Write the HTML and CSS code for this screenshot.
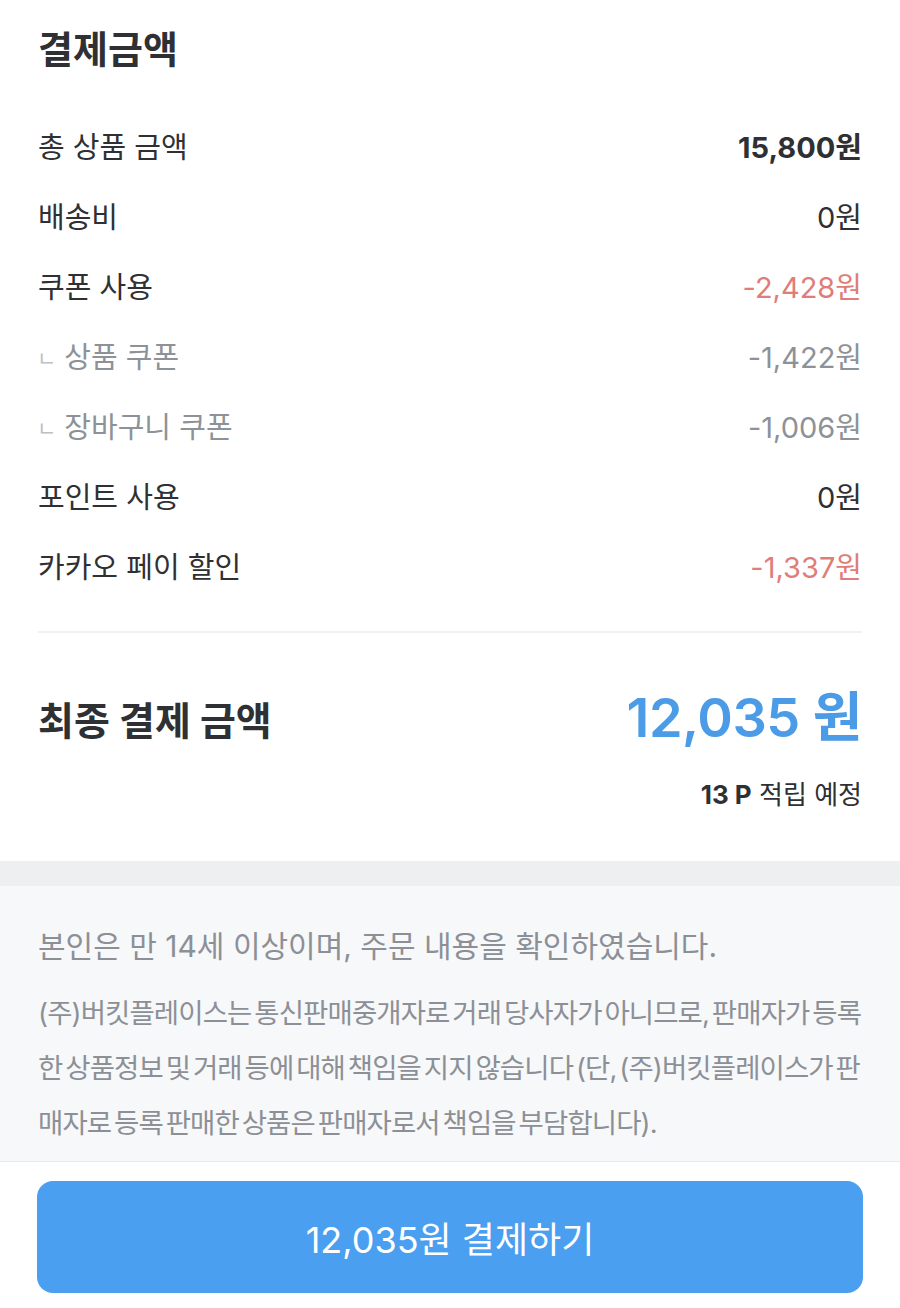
FILE: index.html
```html
<!DOCTYPE html>
<html lang="ko">
<head>
  <meta charset="UTF-8">
  <title>결제금액</title>
  <meta name="viewport" content="width=device-width, initial-scale=1.0">
  <link rel="stylesheet" href="styles.css">
</head>
<body>
  <section class="summary">
    <h2 class="title">결제금액</h2>

    <ul class="rows">
      <li class="row"><span>총 상품 금액</span><strong>15,800원</strong></li>
      <li class="row"><span>배송비</span><span>0원</span></li>
      <li class="row"><span>쿠폰 사용</span><span class="minus">-2,428원</span></li>
      <li class="row sub"><span><i class="mark">ㄴ</i>상품 쿠폰</span><span>-1,422원</span></li>
      <li class="row sub"><span><i class="mark">ㄴ</i>장바구니 쿠폰</span><span>-1,006원</span></li>
      <li class="row"><span>포인트 사용</span><span>0원</span></li>
      <li class="row"><span>카카오 페이 할인</span><span class="minus">-1,337원</span></li>
    </ul>

    <div class="total">
      <div class="total-line">
        <h3>최종 결제 금액</h3>
        <span class="total-price">12,035 원</span>
      </div>
      <p class="point"><b>13 P</b> 적립 예정</p>
    </div>
  </section>

  <div class="spacer"></div>

  <section class="notice">
    <p class="agree">본인은 만 14세 이상이며, 주문 내용을 확인하였습니다.</p>
    <p class="legal">(주)버킷플레이스는 통신판매중개자로 거래 당사자가 아니므로, 판매자가 등록한 상품정보 및 거래 등에 대해 책임을 지지 않습니다 (단, (주)버킷플레이스가 판매자로 등록 판매한 상품은 판매자로서 책임을 부담합니다).</p>
  </section>

  <div class="pay-bar">
    <button type="button" class="pay-btn">12,035원 결제하기</button>
  </div>
</body>
</html>
```

FILE: styles.css
```css
body {
  margin: 0;
  background: #fff;
  color: #2f3033;
  font-family: Inter, "Noto Sans CJK KR", sans-serif;
}
ul, p, h2, h3 {
  margin: 0;
  padding: 0;
}
.summary {
  padding: 24px 38px 0 38px;
}
.title {
  font-size: 38px;
  font-weight: 700;
  line-height: 50px;
}
.rows {
  list-style: none;
  margin-top: 36px;
  padding-bottom: 31px;
  border-bottom: 2px solid #f0f1f2;
}
.row {
  display: flex;
  justify-content: space-between;
  align-items: center;
  height: 70px;
  font-size: 29px;
}
.row strong {
  font-weight: 700;
}
.row .minus {
  color: #e07d78;
}
.row.sub {
  color: #8d9298;
}
.mark {
  font-style: normal;
  font-size: 21px;
  color: #bcc0c4;
  margin: 0 8px 0 -1px;
  position: relative;
  top: -2px;
}
.total {
  padding: 50px 0 50px;
}
.total-line {
  display: flex;
  justify-content: space-between;
  align-items: center;
}
.total-line h3 {
  font-size: 39px;
  font-weight: 700;
}
.total-price {
  font-size: 54px;
  font-weight: 600;
  color: #4c9be6;
  line-height: 70px;
  letter-spacing: -0.5px;
}
.point {
  text-align: right;
  font-size: 26px;
  margin-top: 21px;
}
.point b {
  font-weight: 700;
}
.spacer {
  height: 25px;
  background: #eeeff1;
}
.notice {
  background: #f7f8fa;
  padding: 40px 38px 10px;
  color: #8c9096;
  border-bottom: 1px solid #e9eaec;
}
.agree {
  font-size: 30px;
  line-height: 40px;
}
.legal {
  margin: 20px -12px 0 0;
  font-size: 27.5px;
  line-height: 55px;
  letter-spacing: -0.9px;
  word-spacing: -4px;
  word-break: break-all;
}
.pay-bar {
  padding: 19px 37px 16px;
}
.pay-btn {
  width: 100%;
  height: 112px;
  border: none;
  border-radius: 16px;
  background: #4a9ff0;
  color: #fff;
  font-family: Inter, "Noto Sans CJK KR", sans-serif;
  font-size: 36px;
  cursor: pointer;
}
```
